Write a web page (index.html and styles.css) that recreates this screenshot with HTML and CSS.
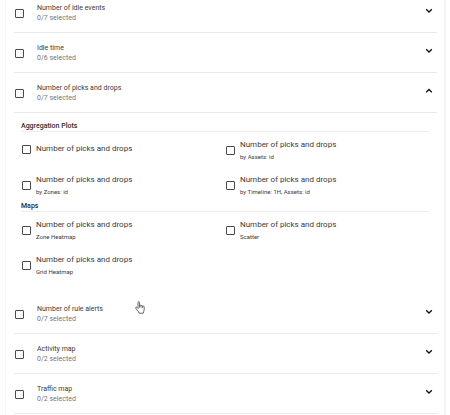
FILE: index.html
```html
<!DOCTYPE html>
<html lang="en">
<head>
<meta charset="utf-8">
<title>Widgets</title>
<link rel="stylesheet" href="styles.css">
</head>
<body>
<main class="card">
  <section class="row">
    <input class="check" type="checkbox" id="idle-events">
    <label class="row-label" for="idle-events">Number of idle events<span class="count">0/7 selected</span></label>
    <button class="toggle" aria-label="Expand"><svg viewBox="0 0 8 6"><path d="M1.2 1.2 4 4l2.800-2.800"/></svg></button>
  </section>
  <section class="row">
    <input class="check" type="checkbox" id="idle-time">
    <label class="row-label" for="idle-time">Idle time<span class="count">0/6 selected</span></label>
    <button class="toggle" aria-label="Expand"><svg viewBox="0 0 8 6"><path d="M1.2 1.2 4 4l2.800-2.800"/></svg></button>
  </section>
  <section class="row">
    <input class="check" type="checkbox" id="picks">
    <label class="row-label" for="picks">Number of picks and drops<span class="count">0/7 selected</span></label>
    <button class="toggle" aria-label="Collapse" aria-expanded="true"><svg viewBox="0 0 8 6"><path d="M1.200 4.300 4 1.500l2.800 2.800"/></svg></button>
  </section>
  <div class="panel">
    <h2 class="heading">Aggregation Plots</h2>
    <div class="options">
      <div class="option single"><input class="check" type="checkbox" id="p1"><label class="option-label" for="p1">Number of picks and drops</label></div>
      <div class="option"><input class="check" type="checkbox" id="p2"><label class="option-label" for="p2">Number of picks and drops<span class="detail">by Assets: id</span></label></div>
      <div class="option"><input class="check" type="checkbox" id="p3"><label class="option-label" for="p3">Number of picks and drops<span class="detail">by Zones: id</span></label></div>
      <div class="option"><input class="check" type="checkbox" id="p4"><label class="option-label" for="p4">Number of picks and drops<span class="detail">by Timeline: 1H, Assets: id</span></label></div>
    </div>
    <h2 class="heading">Maps</h2>
    <div class="options">
      <div class="option"><input class="check" type="checkbox" id="m1"><label class="option-label" for="m1">Number of picks and drops<span class="detail">Zone Heatmap</span></label></div>
      <div class="option"><input class="check" type="checkbox" id="m2"><label class="option-label" for="m2">Number of picks and drops<span class="detail">Scatter</span></label></div>
      <div class="option"><input class="check" type="checkbox" id="m3"><label class="option-label" for="m3">Number of picks and drops<span class="detail">Grid Heatmap</span></label></div>
    </div>
  </div>
  <section class="row">
    <input class="check" type="checkbox" id="alerts">
    <label class="row-label" for="alerts">Number of rule alerts<span class="count">0/7 selected</span></label>
    <button class="toggle" aria-label="Expand"><svg viewBox="0 0 8 6"><path d="M1.2 1.2 4 4l2.800-2.800"/></svg></button>
  </section>
  <section class="row">
    <input class="check" type="checkbox" id="activity">
    <label class="row-label" for="activity">Activity map<span class="count">0/2 selected</span></label>
    <button class="toggle" aria-label="Expand"><svg viewBox="0 0 8 6"><path d="M1.2 1.2 4 4l2.800-2.800"/></svg></button>
  </section>
  <section class="row">
    <input class="check" type="checkbox" id="traffic">
    <label class="row-label" for="traffic">Traffic map<span class="count">0/2 selected</span></label>
    <button class="toggle" aria-label="Expand"><svg viewBox="0 0 8 6"><path d="M1.2 1.2 4 4l2.800-2.800"/></svg></button>
  </section>
</main>
<svg class="pointer" viewBox="0 0 10 13" aria-hidden="true"><path d="M3 7.500V1.600c0-1.300 1.500-1.300 1.500 0v3c.3-.7 1.500-.6 1.500.3.3-.6 1.500-.5 1.500.4.500-.6 1.700-.3 1.700.6v2.600c0 1.500-.9 2-.9 3.700H4c0-1.500-1.700-2.400-3.200-4.900C.3 6.300 1.300 5.700 2 6.500zM4.500 4.600v2M6 4.900v1.700M7.500 5.300v1.500"/></svg>
</body>
</html>
```
FILE: styles.css
```css
* {
  box-sizing: border-box;
}

body {
  margin: 0;
  background: #fff;
  color: #3a3a3a;
  font-family: Roboto, sans-serif;
  font-size: 7px;
}

/* The list is scrolled a little past its first row's top edge. */
.card {
  min-height: calc(100vh + 7px);
  margin: -7px 4px 0 5px;
  padding: 0 7px 0 8px;
  border: solid #f5f5f5;
  border-width: 0 2px 0 1px;
}

.row {
  display: flex;
  align-items: center;
  height: 40px;
  padding: 0 4px 0 1px;
  border-bottom: 1px solid #e9e9e9;
}

.check {
  appearance: none;
  flex: none;
  width: 9px;
  height: 9px;
  margin: 0;
  border: 1px solid #4a4a4a;
  border-radius: 1px;
  background: #fff;
}

.check:checked {
  background: #4a4a4a;
}

.row .check {
  margin-top: 2px;
}

.row-label {
  flex: 1;
  margin-left: 13px;
  line-height: 10px;
}

.count {
  display: block;
  color: #777;
}

.toggle {
  align-self: flex-start;
  width: 8px;
  height: 6px;
  margin-top: 15px;
  padding: 0;
  border: 0;
  background: none;
}

.toggle svg {
  display: block;
  width: 8px;
  height: 6px;
  fill: none;
  stroke: #111;
  stroke-width: 1.3;
}

.panel {
  padding: 10px 8px 11px 7px;
}

.heading {
  margin: 0 0 1px;
  padding-bottom: 1px;
  border-bottom: 1px solid #eee;
  color: #2a2a2a;
  font-size: 7px;
  font-weight: 500;
  line-height: 7px;
}

.options {
  display: grid;
  grid-template-columns: 1fr 1fr;
  align-items: start;
}

.option {
  display: flex;
  align-items: center;
  height: 35px;
  padding-left: 1px;
}

.option.single {
  height: 32px;
}

.option-label {
  margin-left: 5px;
  font-size: 8px;
  line-height: 12px;
}

.detail {
  display: block;
  font-size: 6px;
}

.pointer {
  position: absolute;
  top: 301px;
  left: 135px;
  width: 10px;
  height: 13px;
  fill: #fff;
  stroke: #444;
  stroke-width: 0.8;
}
```
